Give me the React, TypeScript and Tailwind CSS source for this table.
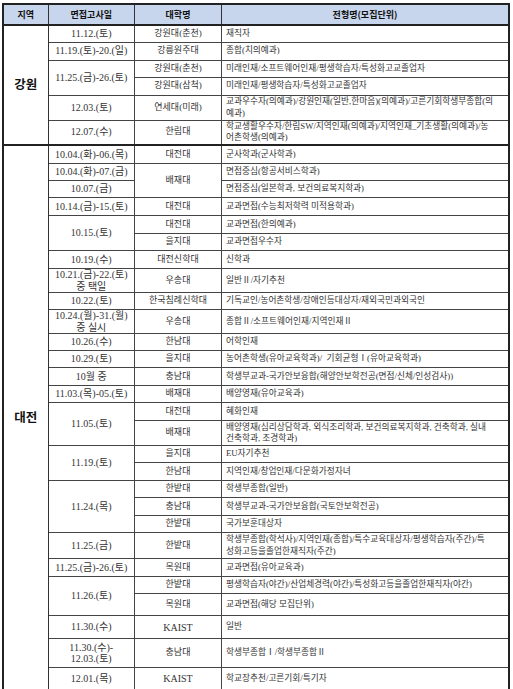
import { Fragment, type ReactNode } from "react";

type Row = {
  h: string;
  date?: ReactNode;
  dateSpan?: number;
  uni?: ReactNode;
  uniSpan?: number;
  desc: ReactNode;
  latinUni?: boolean;
};

const gangwon: Row[] = [
  { h: "h-[17px]", date: "11.12.(토)", uni: "강원대(춘천)", desc: "재직자" },
  { h: "h-[18px]", date: "11.19.(토)-20.(일)", uni: "강릉원주대", desc: "종합(치의예과)" },
  { h: "h-[17px]", date: "11.25.(금)-26.(토)", dateSpan: 2, uni: "강원대(춘천)", desc: "미래인재/소프트웨어인재/평생학습자/특성화고교졸업자" },
  { h: "h-[18px]", uni: "강원대(삼척)", desc: "미래인재/평생학습자/특성화고교졸업자" },
  {
    h: "h-[25px]",
    date: "12.03.(토)",
    uni: "연세대(미래)",
    desc: (
      <>
        교과우수자(의예과)/강원인재(일반,한마음)(의예과)/고른기회학생부종합(의
        <br />
        예과)
      </>
    ),
  },
  {
    h: "h-[24px]",
    date: "12.07.(수)",
    uni: "한림대",
    desc: (
      <>
        학교생활우수자/한림SW/지역인재(의예과)/지역인재_기초생활(의예과)/농
        <br />
        어촌학생(의예과)
      </>
    ),
  },
];

const daejeon: Row[] = [
  { h: "h-[19px]", date: "10.04.(화)-06.(목)", uni: "대전대", desc: "군사학과(군사학과)" },
  { h: "h-[17px]", date: "10.04.(화)-07.(금)", uni: "배재대", uniSpan: 2, desc: "면접중심(항공서비스학과)" },
  { h: "h-[17px]", date: "10.07.(금)", desc: "면접중심(일본학과, 보건의료복지학과)" },
  { h: "h-[18px]", date: "10.14.(금)-15.(토)", uni: "대전대", desc: "교과면접(수능최저학력 미적용학과)" },
  { h: "h-[18px]", date: "10.15.(토)", dateSpan: 2, uni: "대전대", desc: "교과면접(한의예과)" },
  { h: "h-[17px]", uni: "을지대", desc: "교과면접우수자" },
  { h: "h-[18px]", date: "10.19.(수)", uni: "대전신학대", desc: "신학과" },
  {
    h: "h-[24px]",
    date: (
      <>
        10.21.(금)-22.(토)
        <br />중 택일
      </>
    ),
    uni: "우송대",
    desc: "일반Ⅱ/자기추천",
  },
  { h: "h-[17px]", date: "10.22.(토)", uni: "한국침례신학대", desc: "기독교인/농어촌학생/장애인등대상자/재외국민과외국인" },
  {
    h: "h-[24px]",
    date: (
      <>
        10.24.(월)-31.(월)
        <br />중 실시
      </>
    ),
    uni: "우송대",
    desc: "종합Ⅱ/소프트웨어인재/지역인재Ⅱ",
  },
  { h: "h-[17px]", date: "10.26.(수)", uni: "한남대", desc: "어학인재" },
  { h: "h-[17px]", date: "10.29.(토)", uni: "을지대", desc: "농어촌학생(유아교육학과)/\u00a0 기회균형Ⅰ(유아교육학과)" },
  { h: "h-[18px]", date: "10월 중", uni: "충남대", desc: "학생부교과-국가안보융합(해양안보학전공(면접/신체/인성검사))" },
  { h: "h-[17px]", date: "11.03.(목)-05.(토)", uni: "배재대", desc: "배양영재(유아교육과)" },
  { h: "h-[18px]", date: "11.05.(토)", dateSpan: 2, uni: "대전대", desc: "혜화인재" },
  {
    h: "h-[25px]",
    uni: "배재대",
    desc: (
      <>
        배양영재(심리상담학과, 외식조리학과, 보건의료복지학과, 건축학과, 실내
        <br />
        건축학과, 조경학과)
      </>
    ),
  },
  { h: "h-[17px]", date: "11.19.(토)", dateSpan: 2, uni: "을지대", desc: "EU자기추천" },
  { h: "h-[18px]", uni: "한남대", desc: "지역인재/창업인재/다문화가정자녀" },
  { h: "h-[17px]", date: "11.24.(목)", dateSpan: 3, uni: "한밭대", desc: "학생부종합(일반)" },
  { h: "h-[18px]", uni: "충남대", desc: "학생부교과-국가안보융합(국토안보학전공)" },
  { h: "h-[17px]", uni: "한밭대", desc: "국가보훈대상자" },
  {
    h: "h-[26px]",
    date: "11.25.(금)",
    uni: "한밭대",
    desc: (
      <>
        학생부종합(학석사)/지역인재(종합)/특수교육대상자/평생학습자(주간)/특
        <br />
        성화고등을졸업한재직자(주간)
      </>
    ),
  },
  { h: "h-[18px]", date: "11.25.(금)-26.(토)", uni: "목원대", desc: "교과면접(유아교육과)" },
  { h: "h-[17px]", date: "11.26.(토)", dateSpan: 2, uni: "한밭대", desc: "평생학습자(야간)/산업체경력(야간)/특성화고등을졸업한재직자(야간)" },
  { h: "h-[22px]", uni: "목원대", desc: "교과면접(해당 모집단위)" },
  { h: "h-[23px]", date: "11.30.(수)", uni: "KAIST", latinUni: true, desc: "일반" },
  {
    h: "h-[29px]",
    date: (
      <>
        11.30.(수)-
        <br />
        12.03.(토)
      </>
    ),
    uni: "충남대",
    desc: "학생부종합Ⅰ/학생부종합Ⅱ",
  },
  { h: "h-[22px]", date: "12.01.(목)", uni: "KAIST", latinUni: true, desc: "학교장추천/고른기회/특기자" },
];

function Section({ name, rows }: { name: string; rows: Row[] }) {
  return (
    <>
      {rows.map((r, i) => {
        // first row of a section gets the heavier rule on top
        const top = i === 0 ? "border-t-2 border-t-[#222]" : "";
        return (
          <tr key={i} className={r.h}>
            {i === 0 && (
              <td
                rowSpan={rows.length}
                className="border border-[#333] border-t-2 border-t-[#222] text-center align-middle text-[12.5px] font-bold text-[#111] font-['Noto_Sans_CJK_KR',sans-serif]"
              >
                {name}
              </td>
            )}
            {r.date !== undefined && (
              <td
                rowSpan={r.dateSpan ?? 1}
                className={`border border-[#444] ${top} px-1 text-center align-middle text-[10px] leading-[11.5px] text-[#333] whitespace-nowrap`}
              >
                {r.date}
              </td>
            )}
            {r.uni !== undefined && (
              <td
                rowSpan={r.uniSpan ?? 1}
                className={
                  r.latinUni
                    ? `border border-[#444] ${top} text-center align-middle text-[10px] text-[#333] whitespace-nowrap`
                    : `border border-[#444] ${top} text-center align-middle text-[9px] text-[#333] whitespace-nowrap`
                }
              >
                {r.uni}
              </td>
            )}
            <td
              className={`border border-[#444] ${top} pl-[4px] pr-0 text-left align-middle text-[8.7px] leading-[11.5px] text-[#333] whitespace-nowrap`}
            >
              {r.desc}
            </td>
          </tr>
        );
      })}
    </>
  );
}

export default function App() {
  return (
    <div className="min-h-screen w-[513px] bg-white pt-[3px] pl-[2px]">
      <table className="w-[508px] table-fixed border-collapse border-2 border-[#222] font-['Liberation_Serif','Noto_Sans_CJK_KR',serif]">
        <colgroup>
          <col className="w-[45px]" />
          <col className="w-[86.5px]" />
          <col className="w-[87px]" />
          <col />
        </colgroup>
        <thead>
          <tr className="h-[21px] bg-[#c7d6ec]">
            {["지역", "면접고사일", "대학명", "전형명(모집단위)"].map((t) => (
              <Fragment key={t}>
                <th className="border border-[#333] border-b-2 border-b-[#222] text-center align-middle text-[9px] font-bold text-[#111] font-['Noto_Sans_CJK_KR',sans-serif]">
                  {t}
                </th>
              </Fragment>
            ))}
          </tr>
        </thead>
        <tbody>
          <Section name="강원" rows={gangwon} />
          <Section name="대전" rows={daejeon} />
        </tbody>
      </table>
    </div>
  );
}
